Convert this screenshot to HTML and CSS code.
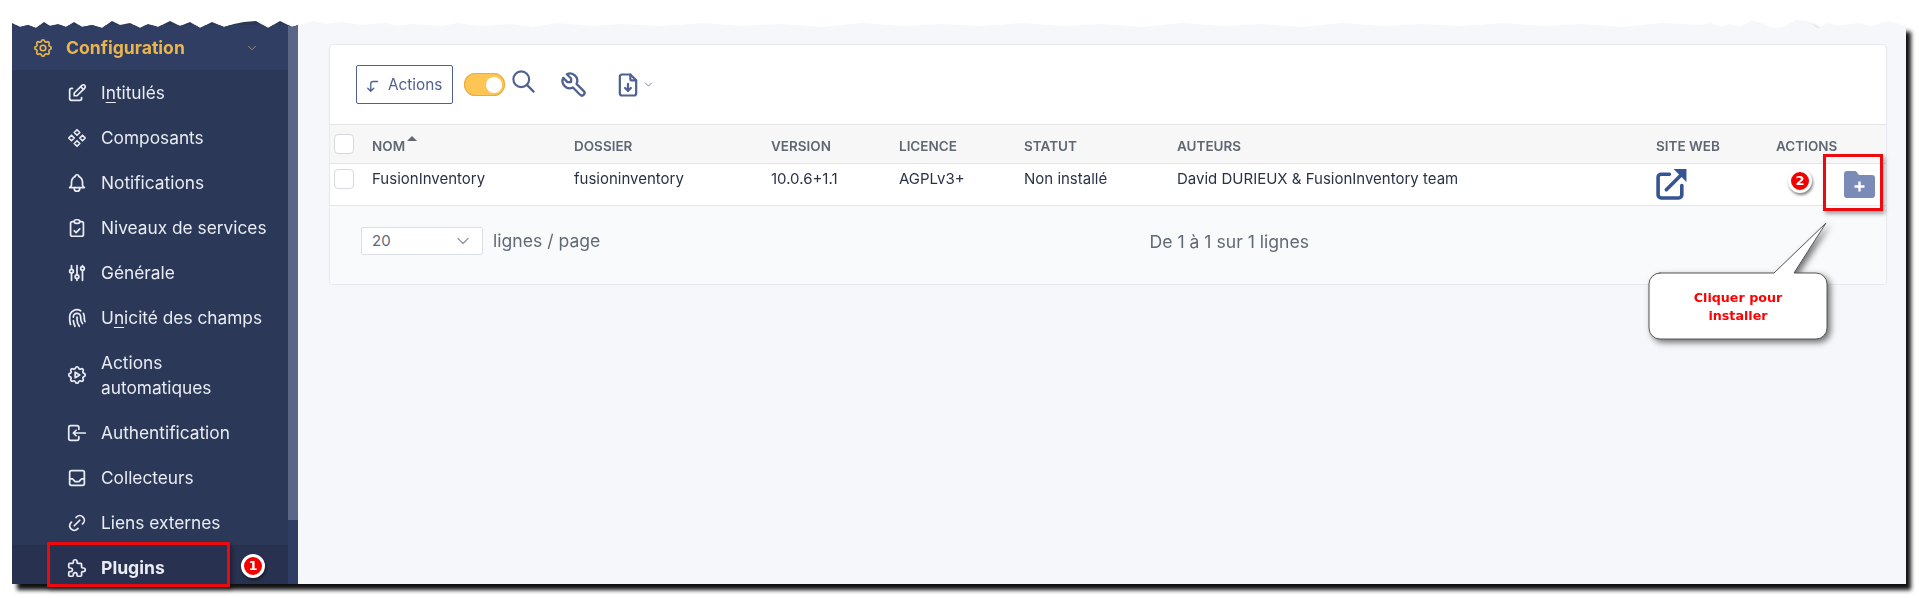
FILE: index.html
```html
<!DOCTYPE html>
<html lang="fr">
<head>
<meta charset="utf-8">
<title>Plugins</title>
<link rel="stylesheet" href="styles.css">
</head>
<body>
<svg class="defs" width="0" height="0" aria-hidden="true">
  <symbol id="i-settings" viewBox="0 0 24 24"><path d="M10.325 4.317c.426 -1.756 2.924 -1.756 3.35 0a1.724 1.724 0 0 0 2.573 1.066c1.543 -.94 3.31 .826 2.37 2.37a1.724 1.724 0 0 0 1.065 2.572c1.756 .426 1.756 2.924 0 3.35a1.724 1.724 0 0 0 -1.066 2.573c.94 1.543 -.826 3.31 -2.37 2.37a1.724 1.724 0 0 0 -2.572 1.065c-.426 1.756 -2.924 1.756 -3.35 0a1.724 1.724 0 0 0 -2.573 -1.066c-1.543 .94 -3.31 -.826 -2.37 -2.37a1.724 1.724 0 0 0 -1.065 -2.572c-1.756 -.426 -1.756 -2.924 0 -3.35a1.724 1.724 0 0 0 1.066 -2.573c-.94 -1.543 .826 -3.31 2.37 -2.37c1 .608 2.296 .07 2.572 -1.065z"/><circle cx="12" cy="12" r="3"/></symbol>
  <symbol id="i-edit" viewBox="0 0 24 24"><path d="M7 7h-1a2 2 0 0 0 -2 2v9a2 2 0 0 0 2 2h9a2 2 0 0 0 2 -2v-1"/><path d="M20.385 6.585a2.1 2.1 0 0 0 -2.97 -2.97l-8.415 8.385v3h3l8.415 -8.415z"/><path d="M16 5l3 3"/></symbol>
  <symbol id="i-components" viewBox="0 0 24 24"><path d="M3 12l3 3l3 -3l-3 -3z"/><path d="M15 12l3 3l3 -3l-3 -3z"/><path d="M9 6l3 3l3 -3l-3 -3z"/><path d="M9 18l3 3l3 -3l-3 -3z"/></symbol>
  <symbol id="i-bell" viewBox="0 0 24 24"><path d="M10 5a2 2 0 1 1 4 0a7 7 0 0 1 4 6v3a4 4 0 0 0 2 3h-16a4 4 0 0 0 2 -3v-3a7 7 0 0 1 4 -6"/><path d="M9 17v1a3 3 0 0 0 6 0v-1"/></symbol>
  <symbol id="i-clipboard" viewBox="0 0 24 24"><path d="M9 5h-2a2 2 0 0 0 -2 2v12a2 2 0 0 0 2 2h10a2 2 0 0 0 2 -2v-12a2 2 0 0 0 -2 -2h-2"/><rect x="9" y="3" width="6" height="4" rx="2"/><path d="M9 15l2 2l4 -4"/></symbol>
  <symbol id="i-adjust" viewBox="0 0 24 24"><circle cx="6" cy="10" r="2"/><path d="M6 4v4"/><path d="M6 12v8"/><circle cx="12" cy="16" r="2"/><path d="M12 4v10"/><path d="M12 18v2"/><circle cx="18" cy="7" r="2"/><path d="M18 4v1"/><path d="M18 9v11"/></symbol>
  <symbol id="i-finger" viewBox="0 0 24 24"><path d="M18.9 7a8 8 0 0 1 1.1 5v1a6 6 0 0 0 .8 3"/><path d="M8 11a4 4 0 0 1 8 0v1a10 10 0 0 0 2 6"/><path d="M12 11v2a14 14 0 0 0 2.5 8"/><path d="M8 15a18 18 0 0 0 1.8 6"/><path d="M4.9 19a22 22 0 0 1 -.9 -7v-1a8 8 0 0 1 12 -6.95"/></symbol>
  <symbol id="i-auto" viewBox="0 0 24 24"><path d="M10.325 4.317c.426 -1.756 2.924 -1.756 3.35 0a1.724 1.724 0 0 0 2.573 1.066c1.543 -.94 3.31 .826 2.37 2.37a1.724 1.724 0 0 0 1.065 2.572c1.756 .426 1.756 2.924 0 3.35a1.724 1.724 0 0 0 -1.066 2.573c.94 1.543 -.826 3.31 -2.37 2.37a1.724 1.724 0 0 0 -2.572 1.065c-.426 1.756 -2.924 1.756 -3.35 0a1.724 1.724 0 0 0 -2.573 -1.066c-1.543 .94 -3.31 -.826 -2.37 -2.37a1.724 1.724 0 0 0 -1.065 -2.572c-1.756 -.426 -1.756 -2.924 0 -3.35a1.724 1.724 0 0 0 1.066 -2.573c-.94 -1.543 .826 -3.31 2.37 -2.37c1 .608 2.296 .07 2.572 -1.065z"/><path d="M10 9v6l5 -3z"/></symbol>
  <symbol id="i-login" viewBox="0 0 24 24"><path d="M14 8v-2a2 2 0 0 0 -2 -2h-7a2 2 0 0 0 -2 2v12a2 2 0 0 0 2 2h7a2 2 0 0 0 2 -2v-2"/><path d="M21 12h-13l3 -3m0 6l-3 -3"/></symbol>
  <symbol id="i-inbox" viewBox="0 0 24 24"><rect x="4" y="4" width="16" height="16" rx="2"/><path d="M4 13h3l3 3h4l3 -3h3"/></symbol>
  <symbol id="i-link" viewBox="0 0 24 24"><path d="M9 15l6 -6"/><path d="M11 6l.463 -.536a5 5 0 0 1 7.071 7.072l-.534 .464"/><path d="M13 18l-.397 .534a5.068 5.068 0 0 1 -7.127 0a4.972 4.972 0 0 1 0 -7.071l.524 -.463"/></symbol>
  <symbol id="i-puzzle" viewBox="0 0 24 24"><path d="M4 7h3a1 1 0 0 0 1 -1v-1a2 2 0 0 1 4 0v1a1 1 0 0 0 1 1h3a1 1 0 0 1 1 1v3a1 1 0 0 0 1 1h1a2 2 0 0 1 0 4h-1a1 1 0 0 0 -1 1v3a1 1 0 0 1 -1 1h-3a1 1 0 0 1 -1 -1v-1a2 2 0 0 0 -4 0v1a1 1 0 0 1 -1 1h-3a1 1 0 0 1 -1 -1v-3a1 1 0 0 1 1 -1h1a2 2 0 0 0 0 -4h-1a1 1 0 0 1 -1 -1v-3a1 1 0 0 1 1 -1"/></symbol>
  <symbol id="i-chevron" viewBox="0 0 24 24"><path d="M6 9l6 6l6 -6"/></symbol>
  <symbol id="i-corner" viewBox="0 0 24 24"><path d="M18 6h-6a3 3 0 0 0 -3 3v10l-4 -4m8 0l-4 4"/></symbol>
  <symbol id="i-search" viewBox="0 0 24 24"><circle cx="10" cy="10" r="7"/><path d="M21 21l-6 -6"/></symbol>
  <symbol id="i-tool" viewBox="0 0 24 24"><path d="M7 10h3v-3l-3.5 -3.5a6 6 0 0 1 8 8l6 6a2 2 0 0 1 -3 3l-6 -6a6 6 0 0 1 -8 -8l3.5 3.5"/></symbol>
  <symbol id="i-file" viewBox="0 0 24 24"><path d="M14 3v4a1 1 0 0 0 1 1h4"/><path d="M17 21h-10a2 2 0 0 1 -2 -2v-14a2 2 0 0 1 2 -2h7l5 5v11a2 2 0 0 1 -2 2z"/><path d="M12 11v6"/><path d="M9.5 14.5l2.5 2.5l2.5 -2.5"/></symbol>
</svg>

<div class="page">
  <div class="shot-shadow">
    <div class="shot">
      <aside class="side">
        <nav class="menu">
          <a class="head"><svg class="ic-head"><use href="#i-settings"/></svg><span class="head-label">Configuration</span><svg class="head-chev"><use href="#i-chevron"/></svg></a>
          <ul class="items">
            <li class="item"><svg class="ic"><use href="#i-edit"/></svg><span>I<u>n</u>titulés</span></li>
            <li class="item"><svg class="ic"><use href="#i-components"/></svg><span>Composants</span></li>
            <li class="item"><svg class="ic"><use href="#i-bell"/></svg><span>Notifications</span></li>
            <li class="item"><svg class="ic"><use href="#i-clipboard"/></svg><span>Niveaux de services</span></li>
            <li class="item"><svg class="ic"><use href="#i-adjust"/></svg><span>Générale</span></li>
            <li class="item"><svg class="ic"><use href="#i-finger"/></svg><span>U<u>n</u>icité des champs</span></li>
            <li class="item item-tall"><svg class="ic"><use href="#i-auto"/></svg><span>Actions<br>automatiques</span></li>
            <li class="item"><svg class="ic"><use href="#i-login"/></svg><span>Authentification</span></li>
            <li class="item"><svg class="ic"><use href="#i-inbox"/></svg><span>Collecteurs</span></li>
            <li class="item"><svg class="ic"><use href="#i-link"/></svg><span>Liens externes</span></li>
            <li class="item item-active"><svg class="ic"><use href="#i-puzzle"/></svg><span>Plugins</span></li>
          </ul>
        </nav>
        <div class="scroll"><div class="thumb"></div></div>
      </aside>

      <main class="main">
        <section class="card">
          <div class="toolbar">
            <button class="btn-actions"><svg class="ic-btn"><use href="#i-corner"/></svg>Actions</button>
            <span class="toggle"><span class="knob"></span></span>
            <svg class="ic-search"><use href="#i-search"/></svg>
            <svg class="ic-tool"><use href="#i-tool"/></svg>
            <svg class="ic-file"><use href="#i-file"/></svg>
            <svg class="ic-small"><use href="#i-chevron"/></svg>
          </div>
          <div class="row row-head">
            <span class="check"></span>
            <span class="sorted">NOM<i class="caret"></i></span>
            <span>DOSSIER</span><span>VERSION</span><span>LICENCE</span><span>STATUT</span><span>AUTEURS</span><span>SITE WEB</span><span>ACTIONS</span>
          </div>
          <div class="row row-body">
            <span class="check check-body"></span>
            <span>FusionInventory</span><span>fusioninventory</span><span>10.0.6+1.1</span><span>AGPLv3+</span><span>Non installé</span><span>David DURIEUX &amp; FusionInventory team</span>
            <span class="cell-icon"><svg class="ic-ext" viewBox="0 0 32 32"><path d="M14 7H6a3 3 0 0 0-3 3v17a3 3 0 0 0 3 3h17a3 3 0 0 0 3-3v-9"/><path d="M11 22 27 6"/><path class="fill" d="M18 2h12.500v12.500z"/></svg></span>
            <span class="cell-act"><svg class="ic-folder" viewBox="0 0 31 27"><path class="folder-shape" d="M3 0h8a2 2 0 0 1 1.500.7L15 4h13a3 3 0 0 1 3 3v17a3 3 0 0 1-3 3H3a3 3 0 0 1-3-3V3a3 3 0 0 1 3-3z"/><path class="folder-plus" d="M15.500 10.500v10M10.500 15.500h10"/></svg></span>
          </div>
          <div class="foot">
            <div class="pager">
              <span class="select"><span>20</span><svg class="ic-select"><use href="#i-chevron"/></svg></span>
              <span class="per-page">lignes / page</span>
            </div>
            <span class="count">De 1 à 1 sur 1 lignes</span>
          </div>
        </section>
      </main>
    </div>
  </div>

  <div class="mark mark-plugins"></div>
  <span class="badge badge-1">1</span>
  <div class="mark mark-install"></div>
  <span class="badge badge-2">2</span>
  <div class="callout">
    <svg class="callout-shape" viewBox="0 0 190 125"><path d="M12 51h114L178 1l-32 50h22a11 11 0 0 1 11 11v44a11 11 0 0 1-11 11H12a11 11 0 0 1-11-11V62a11 11 0 0 1 11-11z"/></svg>
    <p class="callout-text">Cliquer pour<br>installer</p>
  </div>
</div>
</body>
</html>
```
FILE: styles.css
```css
* { box-sizing: border-box; }
html, body { margin: 0; padding: 0; background: #fff; }
body { font-family: Inter, "Liberation Sans", sans-serif; overflow: hidden; }
.defs { position: absolute; }
svg { fill: none; stroke: currentColor; stroke-linecap: round; stroke-linejoin: round; stroke-width: 2; flex: none; }

.page { position: relative; width: 1919px; height: 598px; overflow: hidden; }
.shot-shadow { position: absolute; left: 12px; top: 18px; width: 1894px; height: 566px; filter: drop-shadow(5px 6px 2px #111); }
.shot {
  display: flex; width: 100%; height: 100%; background: #f5f7fb;
  clip-path: polygon(0 5px, 8px 9px, 16px 7px, 24px 10px, 32px 4px, 38px 8px, 46px 6px, 54px 9px, 62px 4px, 70px 9px, 80px 7px, 90px 10px, 100px 3px, 108px 7px, 118px 5px, 128px 10px, 136px 6px, 146px 9px, 158px 3px, 168px 8px, 178px 4px, 188px 10px, 200px 4px, 212px 9px, 222px 6px, 232px 4px, 244px 3px, 256px 10px, 268px 3px, 280px 9px, 290px 6px, 302px 3px, 312px 6px, 330px 4px, 350px 7px, 372px 5px, 386px 8px, 400px 6px, 430px 8px, 445px 5px, 470px 8px, 500px 6px, 520px 9px, 545px 5px, 580px 8px, 610px 6px, 650px 8px, 690px 5px, 730px 8px, 770px 6px, 810px 9px, 850px 5px, 890px 8px, 930px 6px, 970px 8px, 1010px 5px, 1050px 8px, 1090px 6px, 1130px 9px, 1170px 5px, 1210px 8px, 1250px 6px, 1290px 9px, 1330px 5px, 1370px 8px, 1410px 6px, 1450px 8px, 1490px 5px, 1530px 8px, 1570px 6px, 1610px 9px, 1650px 5px, 1690px 7px, 1698px 5px, 1708px 9px, 1718px 6px, 1728px 9px, 1740px 2px, 1752px 8px, 1762px 10px, 1772px 9px, 1784px 2px, 1796px 3px, 1806px 10px, 1816px 5px, 1826px 8px, 1838px 6px, 1848px 5px, 1858px 9px, 1868px 5px, 1878px 3px, 1886px 7px, 1894px 8px, 1894px 566px, 0 566px);
}

.side { display: flex; width: 286px; height: 100%; background: #2b3858; color: #e9ecf3; flex: none; }
.menu { width: 276px; padding-top: 7px; }
.scroll { width: 10px; background: #2f3c63; }
.thumb { width: 10px; height: 502px; background: #5a6588; }
.head { display: flex; align-items: center; height: 45px; padding-left: 20px; color: #e8b54e; background: #2f3e62; font-size: 17.600px; font-weight: 700; }
.ic-head { width: 22px; height: 22px; stroke-width: 1.800; margin-right: 12px; }
.head-label { flex: 1; margin-top: -1px; }
.head-chev { width: 14px; height: 14px; margin-right: 29px; stroke-width: 1.500; opacity: .75; }
.items { list-style: none; margin: 0; padding: 0 0 0 55px; }
.item { display: flex; align-items: center; height: 45px; margin-left: -55px; padding-left: 54px; font-size: 17.300px; line-height: 25.500px; }
.item u { text-underline-offset: 3px; text-decoration-thickness: 1px; }
.ic { width: 22px; height: 22px; margin-right: 13px; stroke-width: 1.900; }
.item-tall { height: 70px; }
.item-active { height: 43px; padding-top: 3px; background: #28314f; font-weight: 700; font-size: 17.600px; }

.main { flex: 1; padding: 26px 19px 0 31px; min-width: 0; }
.card { height: 241px; background: #fff; border: 1px solid #e6e8ee; border-radius: 4px; overflow: hidden; }
.toolbar { display: flex; align-items: center; height: 79px; padding-left: 26px; color: #4f6190; }
.btn-actions { display: inline-flex; align-items: center; height: 39px; width: 97px; padding: 0 0 0 7px; border: 1px solid #4f6190; border-radius: 2px; background: #fff; color: #4f6190; font: 15.300px Inter, "Liberation Sans", sans-serif; }
.ic-btn { width: 18px; height: 18px; margin: 3px 6px 0 0; stroke-width: 1.800; }
.toggle { display: flex; justify-content: flex-end; align-items: center; width: 41px; height: 23px; margin-left: 11px; padding-right: 3px; border-radius: 12px; background: #fdc554; box-shadow: inset 0 0 0 1px #e7ad44; }
.knob { width: 16px; height: 16px; border-radius: 50%; background: #fff; }
.ic-search { width: 27px; height: 27px; margin: -7px 0 0 5px; stroke-width: 1.900; }
.ic-tool { width: 29px; height: 29px; margin: 0 0 0 22px; stroke-width: 1.900; }
.ic-file { width: 28px; height: 28px; margin-left: 26px; stroke-width: 1.900; }
.ic-small { width: 13px; height: 13px; stroke-width: 1.800; opacity: .75; }

.row { display: grid; grid-template-columns: 42px 202px 197px 128px 125px 153px 479px 120px 1fr; align-items: center; }
.row-head { height: 40px; padding-top: 4px; background: #f7f7f8; border-top: 1px solid #e4e5e9; border-bottom: 1px solid #e4e5e9; color: #5f6773; font-size: 13.500px; font-weight: 600; }
.row-body { height: 42px; padding-bottom: 12px; border-bottom: 1px solid #e4e5e9; color: #2a3346; font-size: 15px; }
.check { width: 20px; height: 20px; margin: -4px 0 0 4px; border: 1px solid #d7d9de; border-radius: 4px; background: #fff; }
.check-body { margin-top: 0; }
.sorted { position: relative; }
.caret { position: absolute; left: 35px; top: -2px; border: 5px solid transparent; border-top: 0; border-bottom: 5px solid #5f6773; }
.cell-icon, .cell-act { margin-bottom: -12px; }
.ic-ext { display: block; width: 33px; height: 33px; margin: -2px 0 0 -1px; color: #355592; stroke-width: 3.500; stroke-linecap: round; }
.ic-ext .fill { fill: #355592; stroke: none; }
.cell-act { padding-left: 68px; }
.ic-folder { display: block; width: 31px; height: 27px; }
.folder-shape { fill: #7a8bb8; stroke: none; }
.folder-plus { stroke: #fff; stroke-width: 2.400; stroke-linecap: butt; }

.foot { display: grid; grid-template-columns: 1fr 1fr; align-items: center; height: 78px; padding: 0 0 0 31px; background: #f9fafc; color: #626976; }
.pager { display: flex; align-items: center; margin-top: -9px; font-size: 17.600px; }
.select { display: flex; justify-content: space-between; align-items: center; width: 122px; height: 28px; padding: 0 9px 0 10px; border: 1px solid #dcdfe5; border-radius: 2px; background: #fff; font-size: 15px; }
.ic-select { width: 20px; height: 20px; stroke-width: 1.500; color: #9097a3; }
.per-page { margin-left: 10px; }
.count { margin: -8px 0 0 26px; font-size: 17.600px; }

.mark { position: absolute; border: 3px solid #ec0a0e; box-shadow: 2px 3px 4px rgba(0,0,0,.35); }
.mark-plugins { left: 47px; top: 542px; width: 183px; height: 45px; }
.mark-install { left: 1823px; top: 154px; width: 60px; height: 57px; }
.badge { position: absolute; width: 24px; height: 24px; border: 3px solid #fff; border-radius: 50%; background: #f20000; color: #fff; font: 700 13px/18px "DejaVu Sans", sans-serif; text-align: center; box-shadow: 1px 2px 3px rgba(0,0,0,.5); }
.badge-1 { left: 241px; top: 554px; }
.badge-2 { left: 1788px; top: 169px; }
.callout { position: absolute; left: 1648px; top: 222px; width: 190px; height: 125px; }
.callout-shape { display: block; width: 190px; height: 125px; fill: #fff; stroke: #555; stroke-width: 1; filter: drop-shadow(3px 3px 3px rgba(0,0,0,.55)); }
.callout-text { position: absolute; left: 1px; top: 67px; width: 178px; margin: 0; color: #f00; font: 700 12.700px/18px "DejaVu Sans", sans-serif; text-align: center; }
```
